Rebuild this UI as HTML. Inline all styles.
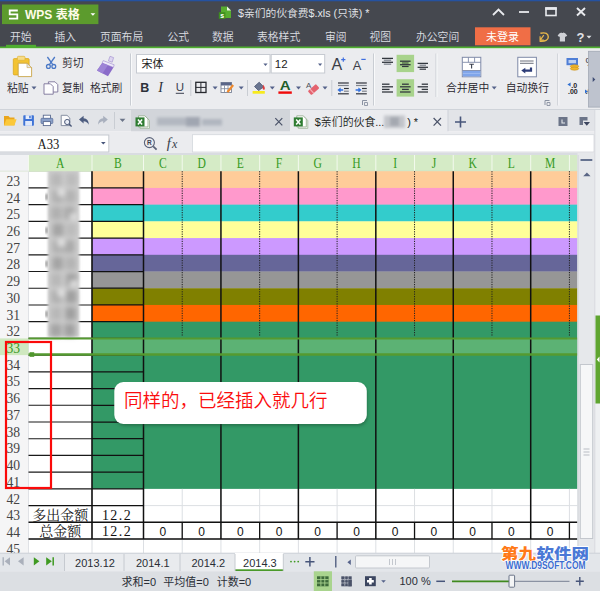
<!DOCTYPE html>
<html lang="zh-CN"><head><meta charset="utf-8"><title>WPS 表格</title>
<style>
html,body{margin:0;padding:0;background:#fff;overflow:hidden}
body{width:600px;height:591px;font-family:"Liberation Sans","Noto Sans CJK SC",sans-serif}
svg{display:block}
</style></head><body>
<svg width="600" height="591" viewBox="0 0 600 591">
<defs>
<filter id="blur3" x="-20%" y="-20%" width="140%" height="140%"><feGaussianBlur stdDeviation="2.7"/></filter>
<filter id="blur1" x="-20%" y="-20%" width="140%" height="140%"><feGaussianBlur stdDeviation="1"/></filter>
<filter id="blur2" x="-20%" y="-20%" width="140%" height="140%"><feGaussianBlur stdDeviation="1.6"/></filter>
<filter id="shadow" x="-10%" y="-20%" width="120%" height="150%"><feGaussianBlur stdDeviation="1.5"/></filter>
<linearGradient id="wpsg" x1="0" y1="0" x2="0" y2="1"><stop offset="0" stop-color="#6aa834"/><stop offset="1" stop-color="#4f8f25"/></linearGradient>
</defs>
<rect x="0" y="0" width="600" height="48" fill="#45484f" />
<rect x="0" y="0" width="600" height="1.3" fill="#2552a0" />
<rect x="2" y="4.5" width="96.4" height="19.6" fill="#5c9b2d"/>
<path d="M17.8 10.5 H9.7 V14.3 H17.3 V18.6 H9" fill="none" stroke="#fff" stroke-width="1.8"/>
<text x="25" y="19" font-size="12" fill="#fffbe8" font-family='"Liberation Sans","Noto Sans CJK SC",sans-serif' text-anchor="start" font-weight="bold" >WPS 表格</text>
<path d="M90.5 13.2 H95.3 L92.9 15.8 Z" fill="#fff"/>
<g><path d="M221 6.4 H227 L231 10.6 V18 H221 Z" fill="#57ad2f"/><path d="M227 6.4 L231 10.6 H227 Z" fill="#eaf6e2"/><rect x="218.8" y="12.2" width="6.6" height="6.6" fill="#3f8f1f"/></g>
<text x="222.1" y="17.7" font-size="7" fill="#fff" font-family='"Liberation Sans","Noto Sans CJK SC",sans-serif' text-anchor="middle" font-weight="bold" >s</text>
<text x="238" y="16.6" font-size="10.75" fill="#e2e5ea" font-family='"Liberation Sans","Noto Sans CJK SC",sans-serif' text-anchor="start" font-weight="350" >$亲们的伙食费$.xls (只读) *</text>
<path d="M493 15 L498.5 9.5 L504 15" fill="none" stroke="#e8eaee" stroke-width="1.8"/>
<line x1="519" y1="12" x2="529" y2="12" stroke="#e8eaee" stroke-width="1.8" />
<rect x="546" y="8" width="10" height="7.5" fill="none" stroke="#e8eaee" stroke-width="1.6"/>
<line x1="545.2" y1="8.6" x2="556.8" y2="8.6" stroke="#e8eaee" stroke-width="2.6" />
<path d="M577 8 L585 15.5 M585 8 L577 15.5" fill="none" stroke="#e8eaee" stroke-width="1.9"/>
<text x="10" y="41.2" font-size="10.8" fill="#dcdee2" font-family='"Liberation Sans","Noto Sans CJK SC",sans-serif' text-anchor="start" font-weight="350" >开始</text>
<text x="54.5" y="41.2" font-size="10.8" fill="#dcdee2" font-family='"Liberation Sans","Noto Sans CJK SC",sans-serif' text-anchor="start" font-weight="350" >插入</text>
<text x="100" y="41.2" font-size="10.8" fill="#dcdee2" font-family='"Liberation Sans","Noto Sans CJK SC",sans-serif' text-anchor="start" font-weight="350" >页面布局</text>
<text x="167.5" y="41.2" font-size="10.8" fill="#dcdee2" font-family='"Liberation Sans","Noto Sans CJK SC",sans-serif' text-anchor="start" font-weight="350" >公式</text>
<text x="212" y="41.2" font-size="10.8" fill="#dcdee2" font-family='"Liberation Sans","Noto Sans CJK SC",sans-serif' text-anchor="start" font-weight="350" >数据</text>
<text x="257" y="41.2" font-size="10.8" fill="#dcdee2" font-family='"Liberation Sans","Noto Sans CJK SC",sans-serif' text-anchor="start" font-weight="350" >表格样式</text>
<text x="325" y="41.2" font-size="10.8" fill="#dcdee2" font-family='"Liberation Sans","Noto Sans CJK SC",sans-serif' text-anchor="start" font-weight="350" >审阅</text>
<text x="369.5" y="41.2" font-size="10.8" fill="#dcdee2" font-family='"Liberation Sans","Noto Sans CJK SC",sans-serif' text-anchor="start" font-weight="350" >视图</text>
<text x="416" y="41.2" font-size="10.8" fill="#dcdee2" font-family='"Liberation Sans","Noto Sans CJK SC",sans-serif' text-anchor="start" font-weight="350" >办公空间</text>
<rect x="6" y="44.8" width="30" height="2.4" fill="#4fae30" />
<rect x="475" y="27.3" width="55.5" height="18" fill="#f06e46" />
<text x="502.5" y="41.3" font-size="11" fill="#fff" font-family='"Liberation Sans","Noto Sans CJK SC",sans-serif' text-anchor="middle" font-weight="normal" >未登录</text>
<path d="M540.4 33.3 Q548.3 31.6 548.3 37.1 Q548.3 41.8 539.6 41.2" fill="none" stroke="#e8b84a" stroke-width="1.4"/><path d="M543.8 35.2 L540.3 39.9 M540.1 36.2 V40.1 H543.9" fill="none" stroke="#e8b84a" stroke-width="1.2"/>
<path d="M559.6 33.2 L561.4 32.4 Q562 33.8 563.4 32.4 L565.2 33.2 L567.2 35.6 L565.6 36.9 L565 36.3 V41.5 H559.8 V36.3 L559.2 36.9 L557.6 35.6 Z" fill="#cfd1d6"/>
<text x="576.4" y="41.6" font-size="13" fill="#e0e2e6" font-family='"Liberation Sans","Noto Sans CJK SC",sans-serif' text-anchor="start" font-weight="bold" >?</text>
<path d="M586.5 35.7 H591.5 L589 38.6 Z" fill="#e0e2e6"/>
<rect x="0" y="46.5" width="600" height="1.9" fill="#4fae30" />
<rect x="0" y="48.6" width="600" height="61" fill="#ebecef" />
<g><rect x="13.3" y="58.6" width="15.8" height="16.3" rx="1" fill="#f3c332" stroke="#dba820" stroke-width="0.8"/><rect x="17.4" y="56.3" width="7.6" height="4" rx="1" fill="#f7dc86" stroke="#e0b33a" stroke-width="0.7"/><path d="M18.2 63.2 H27 L31.6 67.6 V76.6 H18.2 Z" fill="#ffffff" stroke="#c9a548" stroke-width="0.9"/><path d="M27 63.2 V67.6 H31.6 Z" fill="#e6e6ea" stroke="#c9a548" stroke-width="0.6"/></g>
<text x="7" y="92.3" font-size="10.8" fill="#1f232b" font-family='"Liberation Sans","Noto Sans CJK SC",sans-serif' text-anchor="start" font-weight="350" >粘贴</text>
<path d="M31.5 86.6 h5 l-2.5 2.8 Z" fill="#55628a"/>
<g fill="none" stroke="#4a78c6" stroke-width="1.3"><path d="M47.4 57 L52.8 64.6"/><path d="M54.8 57 L49.4 64.6"/><circle cx="48.4" cy="66.4" r="1.9"/><circle cx="53.8" cy="66.4" r="1.9"/></g>
<text x="62" y="67.3" font-size="10.8" fill="#1f232b" font-family='"Liberation Sans","Noto Sans CJK SC",sans-serif' text-anchor="start" font-weight="350" >剪切</text>
<g fill="#fdfdfe" stroke="#7a7398" stroke-width="0.9"><path d="M48.4 81.8 H55 L57.8 84.6 V92 H48.4 Z"/><path d="M44 83.8 H50.4 L53.2 86.6 V94.2 H44 Z"/></g>
<text x="62" y="92.3" font-size="10.8" fill="#1f232b" font-family='"Liberation Sans","Noto Sans CJK SC",sans-serif' text-anchor="start" font-weight="350" >复制</text>
<g><path d="M110 56.3 L113.6 57.6 L112.2 62.2 L108.4 60.9 Z" fill="#ddd5f0" stroke="#a897d2" stroke-width="0.7"/><path d="M103.2 60.6 L114.2 64.8 L113.4 67.4 L102.2 63.1 Z" fill="#eee9f9" stroke="#a897d2" stroke-width="0.7"/><path d="M102.2 63.1 L113.4 67.4 L108 76.3 L97 70.5 Z" fill="#8a6bc9"/><path d="M102.2 63.1 L107.8 65.2 L102.5 73.4 L97 70.5 Z" fill="#9d83d6"/></g>
<text x="90" y="92.3" font-size="10.8" fill="#1f232b" font-family='"Liberation Sans","Noto Sans CJK SC",sans-serif' text-anchor="start" font-weight="350" >格式刷</text>
<line x1="130.5" y1="53.5" x2="130.5" y2="105.5" stroke="#c9cdd3" stroke-width="1" />
<line x1="131.5" y1="53.5" x2="131.5" y2="105.5" stroke="#f9fafb" stroke-width="1" />
<rect x="136.5" y="54.5" width="133.5" height="18.5" fill="#fff" stroke="#c6cad1" stroke-width="1"/>
<text x="141.5" y="67.8" font-size="11" fill="#222" font-family='"Liberation Sans","Noto Sans CJK SC",sans-serif' text-anchor="start" font-weight="normal" >宋体</text>
<path d="M263.4 63.6 h4.2 l-2.1 2.4 Z" fill="#55628a"/>
<rect x="271.2" y="54.5" width="53.5" height="18.5" fill="#fff" stroke="#c6cad1" stroke-width="1"/>
<text x="274.8" y="68" font-size="11.5" fill="#222" font-family='"Liberation Sans","Noto Sans CJK SC",sans-serif' text-anchor="start" font-weight="normal" >12</text>
<path d="M318 63.6 h4.2 l-2.1 2.4 Z" fill="#55628a"/>
<text x="331.4" y="69.8" font-size="16" fill="#3a3e48" font-family='"Liberation Sans","Noto Sans CJK SC",sans-serif' text-anchor="start" font-weight="normal" >A</text>
<path d="M341.2 59.7 H345.4 M343.3 57.6 V61.8" stroke="#3f6fe0" stroke-width="1.2" fill="none"/>
<text x="352.8" y="69.8" font-size="12.8" fill="#3a3e48" font-family='"Liberation Sans","Noto Sans CJK SC",sans-serif' text-anchor="start" font-weight="normal" >A</text>
<line x1="361.3" y1="59.4" x2="365.7" y2="59.4" stroke="#3f6fe0" stroke-width="1.2" />
<text x="140.3" y="92.2" font-size="12.5" fill="#2d313a" font-family='"Liberation Sans","Noto Sans CJK SC",sans-serif' text-anchor="start" font-weight="bold" >B</text>
<text x="158.3" y="92.4" font-size="14" fill="#2d313a" font-family='"Liberation Serif","Noto Serif CJK SC",serif' text-anchor="start" font-weight="normal" font-style="italic">I</text>
<text x="175.8" y="91.2" font-size="11.5" fill="#3c4250" font-family='"Liberation Sans","Noto Sans CJK SC",sans-serif' text-anchor="start" font-weight="normal" >U</text>
<line x1="175.8" y1="93.3" x2="184" y2="93.3" stroke="#3c4250" stroke-width="1" />
<line x1="190.8" y1="80" x2="190.8" y2="96" stroke="#c9cdd3" stroke-width="1" />
<g fill="none" stroke="#26282e"><rect x="195.8" y="82.3" width="10.2" height="10.2" stroke-width="1.3"/><path d="M200.9 82.3 V92.5 M195.8 87.4 H206" stroke-width="1"/></g>
<path d="M212.6 86.6 h5 l-2.5 2.8 Z" fill="#55628a"/>
<g><rect x="221" y="82.5" width="10.5" height="10" fill="#fff" stroke="#7b8498" stroke-width="0.9"/><rect x="221" y="82.5" width="10.5" height="3" fill="#5a6688"/><path d="M221 88.7 H231.5 M224.5 85.5 V92.5 M228 85.5 V92.5" stroke="#7b8498" stroke-width="0.8" fill="none"/><path d="M226.5 91.5 L232.3 84.3 L234 85.8 L228.4 92.8 Z" fill="#f08a2c"/></g>
<path d="M238.7 86.6 h5 l-2.5 2.8 Z" fill="#55628a"/>
<line x1="247.5" y1="80" x2="247.5" y2="96" stroke="#c9cdd3" stroke-width="1" />
<g><path d="M254.5 86.5 L259.2 82.2 L263.6 86.8 L258.6 90.6 Z" fill="#6a7590" stroke="#4a5672" stroke-width="0.8"/><path d="M263 84.5 Q265.5 87.5 264.6 89.6 Q263.2 90.4 262.6 88.6 Z" fill="#e23b3b"/><rect x="252.6" y="91" width="12.2" height="2.7" fill="#f7ea1c"/></g>
<path d="M269.8 86.6 h5 l-2.5 2.8 Z" fill="#55628a"/>
<text transform="translate(285.1,90.3) scale(1.16,1)" font-size="13" fill="#1f5e2a" font-family='"Liberation Sans","Noto Sans CJK SC",sans-serif' text-anchor="middle" font-weight="bold" >A</text>
<rect x="278.4" y="91.4" width="13.4" height="2.4" fill="#f00a0a" />
<path d="M296 86.6 h5 l-2.5 2.8 Z" fill="#55628a"/>
<text x="306" y="88.3" font-size="8" fill="#4a4f5a" font-family='"Liberation Sans","Noto Sans CJK SC",sans-serif' text-anchor="start" font-weight="normal" >A</text>
<g transform="rotate(-42 313.6 89.6)"><rect x="308.2" y="86.9" width="10.8" height="5.4" rx="1" fill="#e4636f"/><rect x="310.6" y="86.9" width="1.2" height="5.4" fill="#f4b0b6"/></g>
<path d="M322.5 86.6 h5 l-2.5 2.8 Z" fill="#55628a"/>
<line x1="331.8" y1="80" x2="331.8" y2="96" stroke="#c9cdd3" stroke-width="1" />
<line x1="338" y1="83" x2="348.8" y2="83" stroke="#2f333b" stroke-width="1.2" />
<line x1="338" y1="85.5" x2="348.8" y2="85.5" stroke="#7f848d" stroke-width="1.2" />
<line x1="344" y1="88.5" x2="348.8" y2="88.5" stroke="#2f333b" stroke-width="1.2" />
<line x1="344" y1="91.2" x2="348.8" y2="91.2" stroke="#7f848d" stroke-width="1.2" />
<line x1="338" y1="93.8" x2="348.8" y2="93.8" stroke="#2f333b" stroke-width="1.2" />
<path d="M340.6 87.4 V92.6 L337.4 90 Z" fill="#2f6fe0"/>
<line x1="340" y1="90" x2="343.2" y2="90" stroke="#2f6fe0" stroke-width="1.5" />
<line x1="356" y1="83" x2="366.8" y2="83" stroke="#2f333b" stroke-width="1.2" />
<line x1="356" y1="85.5" x2="366.8" y2="85.5" stroke="#7f848d" stroke-width="1.2" />
<line x1="362" y1="88.5" x2="366.8" y2="88.5" stroke="#2f333b" stroke-width="1.2" />
<line x1="362" y1="91.2" x2="366.8" y2="91.2" stroke="#7f848d" stroke-width="1.2" />
<line x1="356" y1="93.8" x2="366.8" y2="93.8" stroke="#2f333b" stroke-width="1.2" />
<path d="M358.4 87.4 V92.6 L361.6 90 Z" fill="#2f6fe0"/>
<line x1="355.6" y1="90" x2="359" y2="90" stroke="#2f6fe0" stroke-width="1.5" />
<path d="M362.5 105.0 V100.5 H367.0" fill="none" stroke="#8a92a2" stroke-width="1"/><path d="M364.5 102.5 H367.5 V105.5 H364.5 Z" fill="none" stroke="#8a92a2" stroke-width="0.9"/>
<line x1="373.5" y1="53.5" x2="373.5" y2="105.5" stroke="#c9cdd3" stroke-width="1" />
<line x1="374.5" y1="53.5" x2="374.5" y2="105.5" stroke="#f9fafb" stroke-width="1" />
<rect x="396.6" y="54.8" width="17.5" height="17.3" fill="#a8d38c" />
<rect x="396.6" y="79.2" width="17.5" height="17.4" fill="#a8d38c" />
<line x1="382" y1="58.4" x2="393" y2="58.4" stroke="#33383f" stroke-width="1.3" />
<line x1="383.8" y1="60.3" x2="391.2" y2="60.3" stroke="#8f949c" stroke-width="1.5" />
<line x1="382" y1="62.3" x2="393" y2="62.3" stroke="#33383f" stroke-width="1.3" />
<line x1="383.8" y1="64.2" x2="391.2" y2="64.2" stroke="#8f949c" stroke-width="1.5" />
<line x1="400" y1="61.2" x2="410.6" y2="61.2" stroke="#33383f" stroke-width="1.3" />
<line x1="402" y1="63" x2="408.6" y2="63" stroke="#5d7a52" stroke-width="1.6" />
<line x1="400" y1="64.7" x2="410.6" y2="64.7" stroke="#33383f" stroke-width="1.3" />
<line x1="402" y1="66.5" x2="408.6" y2="66.5" stroke="#33383f" stroke-width="1.2" />
<line x1="417.6" y1="63.4" x2="428" y2="63.4" stroke="#33383f" stroke-width="1.3" />
<line x1="419.6" y1="65.3" x2="426" y2="65.3" stroke="#8f949c" stroke-width="1.5" />
<line x1="417.6" y1="67.3" x2="428" y2="67.3" stroke="#33383f" stroke-width="1.3" />
<line x1="419.6" y1="69.2" x2="426" y2="69.2" stroke="#33383f" stroke-width="1.2" />
<line x1="382" y1="84.2" x2="389.5" y2="84.2" stroke="#33383f" stroke-width="1.3" />
<line x1="382" y1="86.8" x2="393" y2="86.8" stroke="#33383f" stroke-width="1.3" />
<line x1="382" y1="89.4" x2="389.5" y2="89.4" stroke="#33383f" stroke-width="1.3" />
<line x1="382" y1="92" x2="393" y2="92" stroke="#33383f" stroke-width="1.3" />
<line x1="402" y1="84.2" x2="408.8" y2="84.2" stroke="#33383f" stroke-width="1.3" />
<line x1="400" y1="86.8" x2="410.6" y2="86.8" stroke="#33383f" stroke-width="1.3" />
<line x1="402" y1="89.4" x2="408.8" y2="89.4" stroke="#33383f" stroke-width="1.3" />
<line x1="400" y1="92" x2="410.6" y2="92" stroke="#33383f" stroke-width="1.3" />
<line x1="421.7" y1="84.2" x2="428" y2="84.2" stroke="#33383f" stroke-width="1.3" />
<line x1="417.6" y1="86.8" x2="428" y2="86.8" stroke="#33383f" stroke-width="1.3" />
<line x1="421.7" y1="89.4" x2="428" y2="89.4" stroke="#33383f" stroke-width="1.3" />
<line x1="417.6" y1="92" x2="428" y2="92" stroke="#33383f" stroke-width="1.3" />
<line x1="436" y1="53.5" x2="436" y2="97" stroke="#c9cdd3" stroke-width="1" />
<line x1="437" y1="53.5" x2="437" y2="97" stroke="#f9fafb" stroke-width="1" />
<g><rect x="462.3" y="57.3" width="18.5" height="19.5" fill="#fff" stroke="#7f8aa8" stroke-width="1"/><path d="M462.3 62.3 H480.8 M468.4 57.3 V62.3 M474.6 57.3 V62.3" stroke="#7f8aa8" stroke-width="0.9" fill="none"/><rect x="462.8" y="70.6" width="17.5" height="5.8" fill="#7fa5ea"/><path d="M462.8 73.4 H480.3" stroke="#a5c0f2" stroke-width="0.8"/><path d="M462.3 70.5 H480.8" stroke="#7f8aa8" stroke-width="0.9"/><path d="M469.3 64.3 H473.9 M471.6 64.3 V68.6" stroke="#3c4250" stroke-width="1.1" fill="none"/></g>
<text x="446" y="92.3" font-size="10.8" fill="#1f232b" font-family='"Liberation Sans","Noto Sans CJK SC",sans-serif' text-anchor="start" font-weight="350" >合并居中</text>
<path d="M491.7 86.6 h5 l-2.5 2.8 Z" fill="#55628a"/>
<g><rect x="517.8" y="57.3" width="18.6" height="19.5" fill="#fff" stroke="#7f8aa8" stroke-width="1"/><path d="M520 61 H533.6 M520 63.3 H533.6" stroke="#5a5f6c" stroke-width="0.9" fill="none"/><path d="M531 67.6 V70.6 H524.5" stroke="#2d3d78" stroke-width="2.2" fill="none"/><path d="M525.3 67.8 V73.4 L521.3 70.6 Z" fill="#2d3d78"/></g>
<text x="505.8" y="92.3" font-size="10.8" fill="#1f232b" font-family='"Liberation Sans","Noto Sans CJK SC",sans-serif' text-anchor="start" font-weight="350" >自动换行</text>
<path d="M545 105.0 V100.5 H549.5" fill="none" stroke="#8a92a2" stroke-width="1"/><path d="M547 102.5 H550 V105.5 H547 Z" fill="none" stroke="#8a92a2" stroke-width="0.9"/>
<line x1="557.8" y1="53.5" x2="557.8" y2="105.5" stroke="#c9cdd3" stroke-width="1" />
<line x1="558.8" y1="53.5" x2="558.8" y2="105.5" stroke="#f9fafb" stroke-width="1" />
<g><rect x="566.5" y="58" width="11.5" height="7.2" fill="#4f7ed6"/><rect x="568.5" y="60" width="7.5" height="3.2" fill="#bcd0f2"/><ellipse cx="574.5" cy="66.3" rx="4.2" ry="1.6" fill="#f0b62e" stroke="#c98f15" stroke-width="0.6"/><ellipse cx="574.5" cy="68.6" rx="4.2" ry="1.6" fill="#f0b62e" stroke="#c98f15" stroke-width="0.6"/></g>
<text x="571.3" y="87.6" font-size="7" fill="#1f2228" font-family='"Liberation Sans","Noto Sans CJK SC",sans-serif' text-anchor="start" font-weight="bold" >.0</text>
<text x="568" y="94.4" font-size="7" fill="#1f2228" font-family='"Liberation Sans","Noto Sans CJK SC",sans-serif' text-anchor="start" font-weight="bold" >.00</text>
<path d="M570.6 82.6 V86.4 L567.4 84.5 Z" fill="#2f6fd0"/>
<text x="585.5" y="66" font-size="11" fill="#3c4250" font-family='"Liberation Sans","Noto Sans CJK SC",sans-serif' text-anchor="start" font-weight="normal" >%</text>
<text x="585.5" y="94.2" font-size="7" fill="#2d313a" font-family='"Liberation Sans","Noto Sans CJK SC",sans-serif' text-anchor="start" font-weight="bold" >.0</text>
<path d="M585 89.5 V93.5 L588 91.5 Z" fill="#2f6fd0"/>
<rect x="588.5" y="51.3" width="12" height="55.8" fill="#bec3ce" stroke="#a2a8b5" stroke-width="0.8"/>
<path d="M592.7 77 L595.3 79.5 L592.7 82 Z" fill="#3d4b72"/>
<rect x="0" y="109.5" width="600" height="22" fill="#e2e4e8" />
<line x1="0" y1="109.5" x2="600" y2="109.5" stroke="#cfd3d9" stroke-width="1" />
<g><path d="M4 125.3 V116 H8.5 L9.8 117.5 H14.5 V125.3 Z" fill="#e9a51c"/><path d="M4 125.5 L6.3 119.3 H16.6 L14.4 125.5 Z" fill="#fbc83a"/></g>
<g><rect x="23.3" y="115.2" width="10.6" height="10.6" rx="0.8" fill="#3e73d6"/><rect x="25.6" y="115.2" width="6" height="3.8" fill="#e8eefb"/><rect x="25.2" y="121" width="6.8" height="4.8" fill="#dfe8fa"/><rect x="29.2" y="115.8" width="1.5" height="2.5" fill="#3e73d6"/></g>
<g><rect x="43.3" y="115.2" width="7.2" height="3.4" fill="#fff" stroke="#5a6a90" stroke-width="0.9"/><rect x="41" y="118.3" width="11.8" height="5.2" rx="0.8" fill="#8aa0c8" stroke="#5f74a0" stroke-width="0.8"/><rect x="43.3" y="121.6" width="7.2" height="4" fill="#fff" stroke="#5a6a90" stroke-width="0.9"/></g>
<g><path d="M61.2 115.3 H67 L69.8 118 V125.6 H61.2 Z" fill="#fbfbfc" stroke="#7b8498" stroke-width="0.9"/><circle cx="67.2" cy="122" r="2.6" fill="#e9edf6" stroke="#4a5878" stroke-width="1"/><path d="M69 124 L71.6 126.4" stroke="#4a5878" stroke-width="1.4"/></g>
<path d="M79 119.6 L83.6 115.8 V118.2 Q88.6 118.2 88.8 124.8 Q87 121.2 83.6 121.2 V123.6 Z" fill="#4e5d80"/>
<path d="M107.8 119.6 L103.2 115.8 V118.2 Q98.2 118.2 98 124.8 Q99.8 121.2 103.2 121.2 V123.6 Z" fill="#a9b0be"/>
<line x1="114.5" y1="112" x2="114.5" y2="129" stroke="#c9cdd3" stroke-width="1" />
<path d="M119.6 118.8 h5.8 l-2.9 3.2 Z" fill="#6b7488"/>
<rect x="131" y="110" width="159" height="21.5" fill="#d2d5da" />
<g transform="translate(135.5,114.8)"><path d="M4.5 2.5 H10.8 L14 5.6 V13.6 H4.5 Z" fill="#f4f8f2" stroke="#9fb59a" stroke-width="0.8"/><path d="M3 1 H9.3 L12.5 4.1 V12.1 H3 Z" fill="#ffffff" stroke="#8fa889" stroke-width="0.8"/><rect x="0" y="2.6" width="9" height="9" fill="#2f7d32"/><path d="M2.4 4.6 L6.6 9.6 M6.6 4.6 L2.4 9.6" stroke="#fff" stroke-width="1.5" fill="none"/></g>
<g filter="url(#blur2)"><rect x="157" y="117.5" width="30" height="8" fill="#b2b7c0"/><rect x="186" y="117" width="14" height="9.5" fill="#a0a6b1"/><rect x="202" y="119" width="20" height="6.5" fill="#b0b6bf"/></g>
<path d="M275.3 118.2 L282.3 125.4 M282.3 118.2 L275.3 125.4" stroke="#4a5268" stroke-width="1.2" fill="none"/>
<rect x="290" y="110" width="158" height="22" fill="#ebecef" />
<g transform="translate(293.8,114.8)"><path d="M4.5 2.5 H10.8 L14 5.6 V13.6 H4.5 Z" fill="#f4f8f2" stroke="#9fb59a" stroke-width="0.8"/><path d="M3 1 H9.3 L12.5 4.1 V12.1 H3 Z" fill="#ffffff" stroke="#8fa889" stroke-width="0.8"/><rect x="0" y="2.6" width="9" height="9" fill="#2f7d32"/><path d="M2.4 4.6 L6.6 9.6 M6.6 4.6 L2.4 9.6" stroke="#fff" stroke-width="1.5" fill="none"/></g>
<text x="314.8" y="126.3" font-size="10.9" fill="#1c1e22" font-family='"Liberation Sans","Noto Sans CJK SC",sans-serif' text-anchor="start" font-weight="350" >$亲们的伙食...</text>
<g filter="url(#blur2)"><rect x="384" y="115.5" width="21" height="12.5" fill="#c2c5ca"/><rect x="390" y="117" width="9" height="9" fill="#a4a8b0"/></g>
<text x="407.2" y="126.3" font-size="10.9" fill="#1c1e22" font-family='"Liberation Sans","Noto Sans CJK SC",sans-serif' text-anchor="start" font-weight="normal" >) *</text>
<path d="M433.6 118 L441 125.6 M441 118 L433.6 125.6" stroke="#4a5268" stroke-width="1.2" fill="none"/>
<line x1="448" y1="110" x2="448" y2="131.5" stroke="#cdd1d8" stroke-width="1" />
<path d="M455 122 H466 M460.5 116.5 V127.5" stroke="#47557a" stroke-width="1.6" fill="none"/>
<rect x="558.5" y="117" width="9" height="9" fill="#6b7488"/><path d="M562 119.5 V123 H565" stroke="#e4e7eb" stroke-width="1.1" fill="none"/>
<path d="M579.5 117 H587.5 V120.5 H583 V125 H579.5 Z" fill="#6b7488"/><path d="M583.6 122 H590 L586.8 125.8 Z" fill="#3d4660"/>
<rect x="0" y="131.5" width="600" height="22" fill="#ebecef" />
<rect x="-1" y="135" width="109.8" height="17" fill="#fff" stroke="#c6cad1" stroke-width="1"/>
<text transform="translate(48.4,148.7) scale(0.87,1)" font-size="14.5" fill="#222" font-family='"Liberation Serif","Noto Serif CJK SC",serif' text-anchor="middle" font-weight="normal" >A33</text>
<path d="M101 142 h4.6 l-2.3 2.6 Z" fill="#47557a"/>
<g fill="none" stroke="#5a6379"><circle cx="149.4" cy="142.6" r="5" stroke-width="1.1"/><path d="M153.2 146.4 L156.6 149.6" stroke-width="1.8"/></g>
<text x="149.4" y="145" font-size="6.5" fill="#3c4250" font-family='"Liberation Sans","Noto Sans CJK SC",sans-serif' text-anchor="middle" font-weight="bold" >R</text>
<text x="166.8" y="148" font-size="14.5" fill="#3a3f4c" font-family='"Liberation Serif","Noto Serif CJK SC",serif' text-anchor="start" font-weight="normal" font-style="italic">f</text>
<text x="172" y="148.2" font-size="12" fill="#3a3f4c" font-family='"Liberation Serif","Noto Serif CJK SC",serif' text-anchor="start" font-weight="normal" font-style="italic">x</text>
<rect x="192.5" y="134.7" width="401.5" height="17.3" fill="#fff" stroke="#d4d7dc" stroke-width="0.8"/>
<rect x="0" y="153" width="600" height="400" fill="#ffffff" />
<rect x="0" y="153" width="600" height="2" fill="#d9dce1" />
<rect x="0" y="155" width="577.5" height="16.5" fill="#d5ebc6" />
<rect x="0" y="155" width="28.5" height="16.5" fill="#f1f2f4" />
<line x1="28.5" y1="155" x2="28.5" y2="171.5" stroke="#f3f9ee" stroke-width="1" />
<line x1="92.0" y1="155" x2="92.0" y2="171.5" stroke="#f3f9ee" stroke-width="1" />
<line x1="143.5" y1="155" x2="143.5" y2="171.5" stroke="#f3f9ee" stroke-width="1" />
<line x1="182.22" y1="155" x2="182.22" y2="171.5" stroke="#f3f9ee" stroke-width="1" />
<line x1="220.94" y1="155" x2="220.94" y2="171.5" stroke="#f3f9ee" stroke-width="1" />
<line x1="259.65999999999997" y1="155" x2="259.65999999999997" y2="171.5" stroke="#f3f9ee" stroke-width="1" />
<line x1="298.38" y1="155" x2="298.38" y2="171.5" stroke="#f3f9ee" stroke-width="1" />
<line x1="337.1" y1="155" x2="337.1" y2="171.5" stroke="#f3f9ee" stroke-width="1" />
<line x1="375.82" y1="155" x2="375.82" y2="171.5" stroke="#f3f9ee" stroke-width="1" />
<line x1="414.53999999999996" y1="155" x2="414.53999999999996" y2="171.5" stroke="#f3f9ee" stroke-width="1" />
<line x1="453.26" y1="155" x2="453.26" y2="171.5" stroke="#f3f9ee" stroke-width="1" />
<line x1="491.98" y1="155" x2="491.98" y2="171.5" stroke="#f3f9ee" stroke-width="1" />
<line x1="530.7" y1="155" x2="530.7" y2="171.5" stroke="#f3f9ee" stroke-width="1" />
<line x1="569.42" y1="155" x2="569.42" y2="171.5" stroke="#f3f9ee" stroke-width="1" />
<line x1="608.14" y1="155" x2="608.14" y2="171.5" stroke="#f3f9ee" stroke-width="1" />
<line x1="0" y1="171.3" x2="577.5" y2="171.3" stroke="#c9d8c0" stroke-width="0.8" />
<text transform="translate(60.2,168.3) scale(0.8,1)" font-size="14.5" fill="#359a22" font-family='"Liberation Serif","Noto Serif CJK SC",serif' text-anchor="middle" font-weight="normal" >A</text>
<text transform="translate(117.8,168.3) scale(0.8,1)" font-size="14.5" fill="#359a22" font-family='"Liberation Serif","Noto Serif CJK SC",serif' text-anchor="middle" font-weight="normal" >B</text>
<text transform="translate(162.9,168.3) scale(0.8,1)" font-size="14.5" fill="#359a22" font-family='"Liberation Serif","Noto Serif CJK SC",serif' text-anchor="middle" font-weight="normal" >C</text>
<text transform="translate(201.6,168.3) scale(0.8,1)" font-size="14.5" fill="#359a22" font-family='"Liberation Serif","Noto Serif CJK SC",serif' text-anchor="middle" font-weight="normal" >D</text>
<text transform="translate(240.3,168.3) scale(0.8,1)" font-size="14.5" fill="#359a22" font-family='"Liberation Serif","Noto Serif CJK SC",serif' text-anchor="middle" font-weight="normal" >E</text>
<text transform="translate(279.0,168.3) scale(0.8,1)" font-size="14.5" fill="#359a22" font-family='"Liberation Serif","Noto Serif CJK SC",serif' text-anchor="middle" font-weight="normal" >F</text>
<text transform="translate(317.7,168.3) scale(0.8,1)" font-size="14.5" fill="#359a22" font-family='"Liberation Serif","Noto Serif CJK SC",serif' text-anchor="middle" font-weight="normal" >G</text>
<text transform="translate(356.5,168.3) scale(0.8,1)" font-size="14.5" fill="#359a22" font-family='"Liberation Serif","Noto Serif CJK SC",serif' text-anchor="middle" font-weight="normal" >H</text>
<text transform="translate(395.2,168.3) scale(0.8,1)" font-size="14.5" fill="#359a22" font-family='"Liberation Serif","Noto Serif CJK SC",serif' text-anchor="middle" font-weight="normal" >I</text>
<text transform="translate(433.9,168.3) scale(0.8,1)" font-size="14.5" fill="#359a22" font-family='"Liberation Serif","Noto Serif CJK SC",serif' text-anchor="middle" font-weight="normal" >J</text>
<text transform="translate(472.6,168.3) scale(0.8,1)" font-size="14.5" fill="#359a22" font-family='"Liberation Serif","Noto Serif CJK SC",serif' text-anchor="middle" font-weight="normal" >K</text>
<text transform="translate(511.3,168.3) scale(0.8,1)" font-size="14.5" fill="#359a22" font-family='"Liberation Serif","Noto Serif CJK SC",serif' text-anchor="middle" font-weight="normal" >L</text>
<text transform="translate(550.1,168.3) scale(0.8,1)" font-size="14.5" fill="#359a22" font-family='"Liberation Serif","Noto Serif CJK SC",serif' text-anchor="middle" font-weight="normal" >M</text>
<rect x="0" y="171.5" width="28.5" height="381.5" fill="#f5f5f6" />
<line x1="28.5" y1="171.5" x2="28.5" y2="553" stroke="#e0e2e6" stroke-width="1" />
<rect x="92.0" y="171.2" width="485.5" height="17.02" fill="#FFCC99" />
<rect x="92.0" y="187.92" width="485.5" height="17.02" fill="#FF99CC" />
<rect x="92.0" y="204.64" width="485.5" height="17.02" fill="#33CCCC" />
<rect x="92.0" y="221.36" width="485.5" height="17.02" fill="#FFFF99" />
<rect x="92.0" y="238.08" width="485.5" height="17.02" fill="#CC99FF" />
<rect x="92.0" y="254.8" width="485.5" height="17.02" fill="#666699" />
<rect x="92.0" y="271.52" width="485.5" height="17.02" fill="#969696" />
<rect x="92.0" y="288.24" width="485.5" height="17.02" fill="#808000" />
<rect x="92.0" y="304.96" width="485.5" height="17.02" fill="#FF6600" />
<rect x="92.0" y="321.68" width="485.5" height="167.2" fill="#339966" />
<rect x="92.0" y="338.4" width="485.5" height="16.72" fill="#5cb274" />
<line x1="143.5" y1="488.88" x2="143.5" y2="553" stroke="#dcdfe3" stroke-width="1" />
<line x1="182.22" y1="488.88" x2="182.22" y2="553" stroke="#dcdfe3" stroke-width="1" />
<line x1="220.94" y1="488.88" x2="220.94" y2="553" stroke="#dcdfe3" stroke-width="1" />
<line x1="259.65999999999997" y1="488.88" x2="259.65999999999997" y2="553" stroke="#dcdfe3" stroke-width="1" />
<line x1="298.38" y1="488.88" x2="298.38" y2="553" stroke="#dcdfe3" stroke-width="1" />
<line x1="337.1" y1="488.88" x2="337.1" y2="553" stroke="#dcdfe3" stroke-width="1" />
<line x1="375.82" y1="488.88" x2="375.82" y2="553" stroke="#dcdfe3" stroke-width="1" />
<line x1="414.53999999999996" y1="488.88" x2="414.53999999999996" y2="553" stroke="#dcdfe3" stroke-width="1" />
<line x1="453.26" y1="488.88" x2="453.26" y2="553" stroke="#dcdfe3" stroke-width="1" />
<line x1="491.98" y1="488.88" x2="491.98" y2="553" stroke="#dcdfe3" stroke-width="1" />
<line x1="530.7" y1="488.88" x2="530.7" y2="553" stroke="#dcdfe3" stroke-width="1" />
<line x1="569.42" y1="488.88" x2="569.42" y2="553" stroke="#dcdfe3" stroke-width="1" />
<line x1="608.14" y1="488.88" x2="608.14" y2="553" stroke="#dcdfe3" stroke-width="1" />
<line x1="92.0" y1="488.88" x2="92.0" y2="553" stroke="#dcdfe3" stroke-width="1" />
<line x1="28.5" y1="505.6" x2="577.5" y2="505.6" stroke="#dcdfe3" stroke-width="1" />
<line x1="28.5" y1="522.32" x2="577.5" y2="522.32" stroke="#dcdfe3" stroke-width="1" />
<line x1="28.5" y1="539.04" x2="577.5" y2="539.04" stroke="#dcdfe3" stroke-width="1" />
<line x1="28.5" y1="555.76" x2="577.5" y2="555.76" stroke="#dcdfe3" stroke-width="1" />
<line x1="28.5" y1="187.92" x2="92.0" y2="187.92" stroke="#1a1a1a" stroke-width="1.15" />
<line x1="28.5" y1="204.64" x2="92.0" y2="204.64" stroke="#1a1a1a" stroke-width="1.15" />
<line x1="28.5" y1="221.36" x2="92.0" y2="221.36" stroke="#1a1a1a" stroke-width="1.15" />
<line x1="28.5" y1="238.08" x2="92.0" y2="238.08" stroke="#1a1a1a" stroke-width="1.15" />
<line x1="28.5" y1="254.8" x2="92.0" y2="254.8" stroke="#1a1a1a" stroke-width="1.15" />
<line x1="28.5" y1="271.52" x2="92.0" y2="271.52" stroke="#1a1a1a" stroke-width="1.15" />
<line x1="28.5" y1="288.24" x2="92.0" y2="288.24" stroke="#1a1a1a" stroke-width="1.15" />
<line x1="28.5" y1="304.96" x2="92.0" y2="304.96" stroke="#1a1a1a" stroke-width="1.15" />
<line x1="28.5" y1="321.68" x2="92.0" y2="321.68" stroke="#1a1a1a" stroke-width="1.15" />
<line x1="28.5" y1="338.4" x2="92.0" y2="338.4" stroke="#1a1a1a" stroke-width="1.15" />
<line x1="28.5" y1="355.12" x2="92.0" y2="355.12" stroke="#1a1a1a" stroke-width="1.15" />
<line x1="28.5" y1="371.84" x2="92.0" y2="371.84" stroke="#1a1a1a" stroke-width="1.15" />
<line x1="28.5" y1="388.56" x2="92.0" y2="388.56" stroke="#1a1a1a" stroke-width="1.15" />
<line x1="28.5" y1="405.28" x2="92.0" y2="405.28" stroke="#1a1a1a" stroke-width="1.15" />
<line x1="28.5" y1="422.0" x2="92.0" y2="422.0" stroke="#1a1a1a" stroke-width="1.15" />
<line x1="28.5" y1="438.72" x2="92.0" y2="438.72" stroke="#1a1a1a" stroke-width="1.15" />
<line x1="28.5" y1="455.44" x2="92.0" y2="455.44" stroke="#1a1a1a" stroke-width="1.15" />
<line x1="28.5" y1="472.16" x2="92.0" y2="472.16" stroke="#1a1a1a" stroke-width="1.15" />
<line x1="28.5" y1="488.88" x2="92.0" y2="488.88" stroke="#1a1a1a" stroke-width="1.15" />
<line x1="92.0" y1="187.92" x2="143.5" y2="187.92" stroke="#111" stroke-width="1.25" />
<line x1="92.0" y1="204.64" x2="143.5" y2="204.64" stroke="#111" stroke-width="1.25" />
<line x1="92.0" y1="221.36" x2="143.5" y2="221.36" stroke="#111" stroke-width="1.25" />
<line x1="92.0" y1="238.08" x2="143.5" y2="238.08" stroke="#111" stroke-width="1.25" />
<line x1="92.0" y1="254.8" x2="143.5" y2="254.8" stroke="#111" stroke-width="1.25" />
<line x1="92.0" y1="271.52" x2="143.5" y2="271.52" stroke="#111" stroke-width="1.25" />
<line x1="92.0" y1="288.24" x2="143.5" y2="288.24" stroke="#111" stroke-width="1.25" />
<line x1="92.0" y1="304.96" x2="143.5" y2="304.96" stroke="#111" stroke-width="1.25" />
<line x1="92.0" y1="321.68" x2="143.5" y2="321.68" stroke="#111" stroke-width="1.25" />
<line x1="92.0" y1="338.4" x2="143.5" y2="338.4" stroke="#111" stroke-width="1.25" />
<line x1="92.0" y1="355.12" x2="143.5" y2="355.12" stroke="#111" stroke-width="1.25" />
<line x1="92.0" y1="371.84" x2="143.5" y2="371.84" stroke="#111" stroke-width="1.25" />
<line x1="92.0" y1="388.56" x2="143.5" y2="388.56" stroke="#111" stroke-width="1.25" />
<line x1="92.0" y1="405.28" x2="143.5" y2="405.28" stroke="#111" stroke-width="1.25" />
<line x1="92.0" y1="422.0" x2="143.5" y2="422.0" stroke="#111" stroke-width="1.25" />
<line x1="92.0" y1="438.72" x2="143.5" y2="438.72" stroke="#111" stroke-width="1.25" />
<line x1="92.0" y1="455.44" x2="143.5" y2="455.44" stroke="#111" stroke-width="1.25" />
<line x1="92.0" y1="472.16" x2="143.5" y2="472.16" stroke="#111" stroke-width="1.25" />
<line x1="92.0" y1="488.88" x2="143.5" y2="488.88" stroke="#111" stroke-width="1.25" />
<line x1="92.0" y1="171.2" x2="92.0" y2="539.04" stroke="#111" stroke-width="1.6" />
<line x1="143.5" y1="171.2" x2="143.5" y2="539.04" stroke="#111" stroke-width="1.5" />
<line x1="182.22" y1="171.2" x2="182.22" y2="336.4" stroke="#222" stroke-width="1" stroke-dasharray="1.2 1.2"/>
<line x1="220.94" y1="171.2" x2="220.94" y2="539.04" stroke="#111" stroke-width="1.5" />
<line x1="259.65999999999997" y1="171.2" x2="259.65999999999997" y2="336.4" stroke="#222" stroke-width="1" stroke-dasharray="1.2 1.2"/>
<line x1="298.38" y1="171.2" x2="298.38" y2="539.04" stroke="#111" stroke-width="1.5" />
<line x1="337.1" y1="171.2" x2="337.1" y2="336.4" stroke="#222" stroke-width="1" stroke-dasharray="1.2 1.2"/>
<line x1="375.82" y1="171.2" x2="375.82" y2="539.04" stroke="#111" stroke-width="1.5" />
<line x1="414.53999999999996" y1="171.2" x2="414.53999999999996" y2="336.4" stroke="#222" stroke-width="1" stroke-dasharray="1.2 1.2"/>
<line x1="453.26" y1="171.2" x2="453.26" y2="539.04" stroke="#111" stroke-width="1.5" />
<line x1="491.98" y1="171.2" x2="491.98" y2="336.4" stroke="#222" stroke-width="1" stroke-dasharray="1.2 1.2"/>
<line x1="530.7" y1="171.2" x2="530.7" y2="539.04" stroke="#111" stroke-width="1.5" />
<line x1="569.42" y1="171.2" x2="569.42" y2="336.4" stroke="#222" stroke-width="1" stroke-dasharray="1.2 1.2"/>
<line x1="28.5" y1="505.6" x2="143.5" y2="505.6" stroke="#111" stroke-width="1.3" />
<line x1="28.5" y1="522.32" x2="577.5" y2="522.32" stroke="#111" stroke-width="1.4" />
<line x1="28.5" y1="539.04" x2="577.5" y2="539.04" stroke="#111" stroke-width="1.4" />
<line x1="182.22" y1="522.32" x2="182.22" y2="539.04" stroke="#111" stroke-width="1.3" />
<line x1="259.65999999999997" y1="522.32" x2="259.65999999999997" y2="539.04" stroke="#111" stroke-width="1.3" />
<line x1="337.1" y1="522.32" x2="337.1" y2="539.04" stroke="#111" stroke-width="1.3" />
<line x1="414.53999999999996" y1="522.32" x2="414.53999999999996" y2="539.04" stroke="#111" stroke-width="1.3" />
<line x1="491.98" y1="522.32" x2="491.98" y2="539.04" stroke="#111" stroke-width="1.3" />
<line x1="569.42" y1="522.32" x2="569.42" y2="539.04" stroke="#111" stroke-width="1.3" />
<g filter="url(#blur1)"><rect x="47.8" y="170" width="31.4" height="167" fill="#cdcdcd"/></g>
<g filter="url(#blur3)">
<rect x="50.9" y="173.2" width="11" height="13" fill="#b8b8b8" />
<rect x="66.1" y="173.2" width="11" height="13" fill="#bcbcbc" />
<rect x="51.9" y="189.9" width="11" height="13" fill="#b0b0b0" />
<rect x="64.9" y="189.9" width="11" height="13" fill="#b4b4b4" />
<rect x="58" y="188.9" width="7" height="7" fill="#e2e2e2" />
<rect x="50.8" y="206.6" width="11" height="13" fill="#b0b0b0" />
<rect x="63.9" y="206.6" width="11" height="13" fill="#aaaaaa" />
<rect x="70" y="213.6" width="7" height="6" fill="#dedede" />
<rect x="52.4" y="223.4" width="11" height="13" fill="#a4a4a4" />
<rect x="65.5" y="223.4" width="11" height="13" fill="#bcbcbc" />
<rect x="52.0" y="240.1" width="11" height="13" fill="#b0b0b0" />
<rect x="63.7" y="240.1" width="11" height="13" fill="#aaaaaa" />
<rect x="58" y="239.1" width="7" height="7" fill="#e2e2e2" />
<rect x="52.1" y="256.8" width="11" height="13" fill="#a4a4a4" />
<rect x="65.3" y="256.8" width="11" height="13" fill="#b4b4b4" />
<rect x="50.8" y="273.5" width="11" height="13" fill="#b8b8b8" />
<rect x="66.0" y="273.5" width="11" height="13" fill="#a0a0a0" />
<rect x="70" y="280.5" width="7" height="6" fill="#dedede" />
<rect x="51.0" y="290.2" width="11" height="13" fill="#b0b0b0" />
<rect x="65.5" y="290.2" width="11" height="13" fill="#a0a0a0" />
<rect x="58" y="289.2" width="7" height="7" fill="#e2e2e2" />
<rect x="50.7" y="307.0" width="11" height="13" fill="#b8b8b8" />
<rect x="65.2" y="307.0" width="11" height="13" fill="#a0a0a0" />
<rect x="50.4" y="323.7" width="11" height="13" fill="#a4a4a4" />
<rect x="64.2" y="323.7" width="11" height="13" fill="#a0a0a0" />
</g>
<g filter="url(#blur1)">
<rect x="45.6" y="193.9" width="1.6" height="6" fill="#666" />
<rect x="45.6" y="227.4" width="1.6" height="6" fill="#666" />
<rect x="45.6" y="260.8" width="1.6" height="6" fill="#666" />
<rect x="45.6" y="311.0" width="1.6" height="6" fill="#666" />
</g>
<rect x="29.5" y="155" width="61.5" height="16.2" fill="#d5ebc6" />
<text transform="translate(60.2,168.3) scale(0.8,1)" font-size="14.5" fill="#359a22" font-family='"Liberation Serif","Noto Serif CJK SC",serif' text-anchor="middle" font-weight="normal" >A</text>
<text transform="translate(13.2,185.8) scale(0.94,1)" font-size="14.5" fill="#444" font-family='"Liberation Serif","Noto Serif CJK SC",serif' text-anchor="middle" font-weight="normal" >23</text>
<text transform="translate(13.2,202.5) scale(0.94,1)" font-size="14.5" fill="#444" font-family='"Liberation Serif","Noto Serif CJK SC",serif' text-anchor="middle" font-weight="normal" >24</text>
<text transform="translate(13.2,219.2) scale(0.94,1)" font-size="14.5" fill="#444" font-family='"Liberation Serif","Noto Serif CJK SC",serif' text-anchor="middle" font-weight="normal" >25</text>
<text transform="translate(13.2,236.0) scale(0.94,1)" font-size="14.5" fill="#444" font-family='"Liberation Serif","Noto Serif CJK SC",serif' text-anchor="middle" font-weight="normal" >26</text>
<text transform="translate(13.2,252.7) scale(0.94,1)" font-size="14.5" fill="#444" font-family='"Liberation Serif","Noto Serif CJK SC",serif' text-anchor="middle" font-weight="normal" >27</text>
<text transform="translate(13.2,269.4) scale(0.94,1)" font-size="14.5" fill="#444" font-family='"Liberation Serif","Noto Serif CJK SC",serif' text-anchor="middle" font-weight="normal" >28</text>
<text transform="translate(13.2,286.1) scale(0.94,1)" font-size="14.5" fill="#444" font-family='"Liberation Serif","Noto Serif CJK SC",serif' text-anchor="middle" font-weight="normal" >29</text>
<text transform="translate(13.2,302.8) scale(0.94,1)" font-size="14.5" fill="#444" font-family='"Liberation Serif","Noto Serif CJK SC",serif' text-anchor="middle" font-weight="normal" >30</text>
<text transform="translate(13.2,319.6) scale(0.94,1)" font-size="14.5" fill="#444" font-family='"Liberation Serif","Noto Serif CJK SC",serif' text-anchor="middle" font-weight="normal" >31</text>
<text transform="translate(13.2,336.3) scale(0.94,1)" font-size="14.5" fill="#444" font-family='"Liberation Serif","Noto Serif CJK SC",serif' text-anchor="middle" font-weight="normal" >32</text>
<rect x="0" y="338.4" width="28.5" height="16.72" fill="#cfe8bf" />
<text transform="translate(13.2,353.0) scale(0.94,1)" font-size="14.5" fill="#3a9a25" font-family='"Liberation Serif","Noto Serif CJK SC",serif' text-anchor="middle" font-weight="normal" >33</text>
<text transform="translate(13.2,369.7) scale(0.94,1)" font-size="14.5" fill="#444" font-family='"Liberation Serif","Noto Serif CJK SC",serif' text-anchor="middle" font-weight="normal" >34</text>
<text transform="translate(13.2,386.4) scale(0.94,1)" font-size="14.5" fill="#444" font-family='"Liberation Serif","Noto Serif CJK SC",serif' text-anchor="middle" font-weight="normal" >35</text>
<text transform="translate(13.2,403.2) scale(0.94,1)" font-size="14.5" fill="#444" font-family='"Liberation Serif","Noto Serif CJK SC",serif' text-anchor="middle" font-weight="normal" >36</text>
<text transform="translate(13.2,419.9) scale(0.94,1)" font-size="14.5" fill="#444" font-family='"Liberation Serif","Noto Serif CJK SC",serif' text-anchor="middle" font-weight="normal" >37</text>
<text transform="translate(13.2,436.6) scale(0.94,1)" font-size="14.5" fill="#444" font-family='"Liberation Serif","Noto Serif CJK SC",serif' text-anchor="middle" font-weight="normal" >38</text>
<text transform="translate(13.2,453.3) scale(0.94,1)" font-size="14.5" fill="#444" font-family='"Liberation Serif","Noto Serif CJK SC",serif' text-anchor="middle" font-weight="normal" >39</text>
<text transform="translate(13.2,470.0) scale(0.94,1)" font-size="14.5" fill="#444" font-family='"Liberation Serif","Noto Serif CJK SC",serif' text-anchor="middle" font-weight="normal" >40</text>
<text transform="translate(13.2,486.8) scale(0.94,1)" font-size="14.5" fill="#444" font-family='"Liberation Serif","Noto Serif CJK SC",serif' text-anchor="middle" font-weight="normal" >41</text>
<text transform="translate(13.2,503.5) scale(0.94,1)" font-size="14.5" fill="#444" font-family='"Liberation Serif","Noto Serif CJK SC",serif' text-anchor="middle" font-weight="normal" >42</text>
<text transform="translate(13.2,520.2) scale(0.94,1)" font-size="14.5" fill="#444" font-family='"Liberation Serif","Noto Serif CJK SC",serif' text-anchor="middle" font-weight="normal" >43</text>
<text transform="translate(13.2,536.9) scale(0.94,1)" font-size="14.5" fill="#444" font-family='"Liberation Serif","Noto Serif CJK SC",serif' text-anchor="middle" font-weight="normal" >44</text>
<text transform="translate(13.2,553.6) scale(0.94,1)" font-size="14.5" fill="#444" font-family='"Liberation Serif","Noto Serif CJK SC",serif' text-anchor="middle" font-weight="normal" >45</text>
<line x1="28.5" y1="338.4" x2="577.5" y2="338.4" stroke="#559a30" stroke-width="2" />
<line x1="28.5" y1="354.52" x2="577.5" y2="354.52" stroke="#559a30" stroke-width="2.7" />
<rect x="29.6" y="352.22" width="4.6" height="4.6" fill="#4f962c" />
<text x="60.3" y="519.6" font-size="14" fill="#111" font-family='"Liberation Serif","Noto Serif CJK SC",serif' text-anchor="middle" font-weight="normal" >多出金额</text>
<text x="60.3" y="536.3" font-size="14" fill="#111" font-family='"Liberation Serif","Noto Serif CJK SC",serif' text-anchor="middle" font-weight="normal" >总金额</text>
<text x="117" y="519.6" font-size="14" fill="#111" font-family='"Liberation Serif","Noto Serif CJK SC",serif' text-anchor="middle" font-weight="normal" letter-spacing="1.4">12.2</text>
<text x="117" y="536.3" font-size="14" fill="#111" font-family='"Liberation Serif","Noto Serif CJK SC",serif' text-anchor="middle" font-weight="normal" letter-spacing="1.4">12.2</text>
<text x="162.9" y="535.5" font-size="12" fill="#111" font-family='"Liberation Sans","Noto Sans CJK SC",sans-serif' text-anchor="middle" font-weight="normal" >0</text>
<text x="201.6" y="535.5" font-size="12" fill="#111" font-family='"Liberation Sans","Noto Sans CJK SC",sans-serif' text-anchor="middle" font-weight="normal" >0</text>
<text x="240.3" y="535.5" font-size="12" fill="#111" font-family='"Liberation Sans","Noto Sans CJK SC",sans-serif' text-anchor="middle" font-weight="normal" >0</text>
<text x="279.0" y="535.5" font-size="12" fill="#111" font-family='"Liberation Sans","Noto Sans CJK SC",sans-serif' text-anchor="middle" font-weight="normal" >0</text>
<text x="317.7" y="535.5" font-size="12" fill="#111" font-family='"Liberation Sans","Noto Sans CJK SC",sans-serif' text-anchor="middle" font-weight="normal" >0</text>
<text x="356.5" y="535.5" font-size="12" fill="#111" font-family='"Liberation Sans","Noto Sans CJK SC",sans-serif' text-anchor="middle" font-weight="normal" >0</text>
<text x="395.2" y="535.5" font-size="12" fill="#111" font-family='"Liberation Sans","Noto Sans CJK SC",sans-serif' text-anchor="middle" font-weight="normal" >0</text>
<text x="433.9" y="535.5" font-size="12" fill="#111" font-family='"Liberation Sans","Noto Sans CJK SC",sans-serif' text-anchor="middle" font-weight="normal" >0</text>
<text x="472.6" y="535.5" font-size="12" fill="#111" font-family='"Liberation Sans","Noto Sans CJK SC",sans-serif' text-anchor="middle" font-weight="normal" >0</text>
<text x="511.3" y="535.5" font-size="12" fill="#111" font-family='"Liberation Sans","Noto Sans CJK SC",sans-serif' text-anchor="middle" font-weight="normal" >0</text>
<text x="550.1" y="535.5" font-size="12" fill="#111" font-family='"Liberation Sans","Noto Sans CJK SC",sans-serif' text-anchor="middle" font-weight="normal" >0</text>
<rect x="6" y="342" width="45" height="146" fill="none" stroke="#fb0a0a" stroke-width="2.2"/>
<rect x="115.5" y="384" width="252" height="42" rx="9" fill="#1d5a3a" opacity="0.55" filter="url(#shadow)"/>
<rect x="114.3" y="382" width="252.5" height="42" rx="9" fill="#ffffff"/>
<text x="124" y="406.6" font-size="18.5" fill="#fb0d0d" font-family='"Liberation Sans","Noto Sans CJK SC",sans-serif' text-anchor="start" font-weight="350" >同样的，已经插入就几行</text>
<rect x="577.5" y="153" width="22.5" height="400" fill="#e6e8eb" />
<rect x="594.8" y="110" width="5.2" height="443" fill="#eef0f2" />
<line x1="594.8" y1="110" x2="594.8" y2="553" stroke="#d3d6db" stroke-width="0.8" />
<line x1="578.0" y1="155" x2="578.0" y2="553" stroke="#cfd2d7" stroke-width="1" />
<line x1="580.5" y1="160" x2="592.3" y2="160" stroke="#47557a" stroke-width="1.6" />
<path d="M583.2 176.2 L586.9 172.6 L590.6 176.2 Z" fill="#5a6685"/>
<rect x="580.3" y="364.5" width="12.4" height="174" fill="#f6f7f8" stroke="#c3c7cd" stroke-width="1"/>
<line x1="583.5" y1="449" x2="589.5" y2="449" stroke="#b9bdc4" stroke-width="1" />
<line x1="583.5" y1="452" x2="589.5" y2="452" stroke="#b9bdc4" stroke-width="1" />
<line x1="583.5" y1="455" x2="589.5" y2="455" stroke="#b9bdc4" stroke-width="1" />
<rect x="595.5" y="315.5" width="4.5" height="88" fill="#5fa530" />
<path d="M599.5 356.5 L596.8 359.5 L599.5 362.5 Z" fill="#fff"/>
<rect x="0" y="553" width="600" height="18.5" fill="#e3e6ea" />
<line x1="0" y1="553.2" x2="600" y2="553.2" stroke="#cdd1d7" stroke-width="1" />
<line x1="3.2" y1="557.2" x2="3.2" y2="565.4" stroke="#aab0bb" stroke-width="1.4" />
<path d="M10 557.2 V565.4 L4.6 561.3 Z" fill="#aab0bb"/>
<path d="M23.6 557.2 V565.4 L18 561.3 Z" fill="#aab0bb"/>
<path d="M33.8 557.2 V565.4 L39.4 561.3 Z" fill="#3f9a22"/>
<path d="M46.2 557.2 V565.4 L51.8 561.3 Z" fill="#3f9a22"/>
<line x1="53.2" y1="557.2" x2="53.2" y2="565.4" stroke="#3f9a22" stroke-width="1.5" />
<rect x="64.5" y="554" width="59.5" height="17" fill="#e9ebee" />
<line x1="64.5" y1="554" x2="64.5" y2="571" stroke="#c6cad0" stroke-width="1" />
<text x="95.0" y="566.6" font-size="11" fill="#2a2e36" font-family='"Liberation Sans","Noto Sans CJK SC",sans-serif' text-anchor="middle" font-weight="normal" >2013.12</text>
<rect x="124" y="554" width="56" height="17" fill="#e9ebee" />
<line x1="124" y1="554" x2="124" y2="571" stroke="#c6cad0" stroke-width="1" />
<text x="152.8" y="566.6" font-size="11" fill="#2a2e36" font-family='"Liberation Sans","Noto Sans CJK SC",sans-serif' text-anchor="middle" font-weight="normal" >2014.1</text>
<rect x="180" y="554" width="55" height="17" fill="#e9ebee" />
<line x1="180" y1="554" x2="180" y2="571" stroke="#c6cad0" stroke-width="1" />
<text x="208.3" y="566.6" font-size="11" fill="#2a2e36" font-family='"Liberation Sans","Noto Sans CJK SC",sans-serif' text-anchor="middle" font-weight="normal" >2014.2</text>
<rect x="235" y="553" width="48.30000000000001" height="18" fill="#ffffff" />
<rect x="235" y="569.3" width="48.30000000000001" height="1.8" fill="#4a9a2a" />
<line x1="235" y1="554" x2="235" y2="571" stroke="#c6cad0" stroke-width="1" />
<text x="259.9" y="566.6" font-size="11" fill="#2a2e36" font-family='"Liberation Sans","Noto Sans CJK SC",sans-serif' text-anchor="middle" font-weight="normal" >2014.3</text>
<line x1="283.3" y1="554" x2="283.3" y2="571" stroke="#c6cad0" stroke-width="1" />
<circle cx="291" cy="561.6" r="0.9" fill="#3f9a22"/>
<circle cx="294.6" cy="561.6" r="0.9" fill="#3f9a22"/>
<circle cx="298.2" cy="561.6" r="0.9" fill="#3f9a22"/>
<path d="M305.3 561.7 H314.5 M309.9 557 V566.4" stroke="#47557a" stroke-width="1.5" fill="none"/>
<line x1="335.8" y1="556" x2="335.8" y2="567.6" stroke="#47557a" stroke-width="1.3" />
<path d="M350.8 559.4 V565 L347.4 562.2 Z" fill="#55628a"/>
<rect x="355.5" y="555.8" width="74" height="12.2" rx="1" fill="#f5f6f7" stroke="#c4c8ce" stroke-width="1"/>
<line x1="389.5" y1="559" x2="389.5" y2="565" stroke="#c4c8ce" stroke-width="1" />
<line x1="392.5" y1="559" x2="392.5" y2="565" stroke="#c4c8ce" stroke-width="1" />
<line x1="395.5" y1="559" x2="395.5" y2="565" stroke="#c4c8ce" stroke-width="1" />
<rect x="0" y="571.3" width="600" height="19.7" fill="#dcdfe3" />
<text x="121.5" y="586" font-size="11" fill="#2a2e36" font-family='"Liberation Sans","Noto Sans CJK SC",sans-serif' text-anchor="start" font-weight="normal" >求和=0</text>
<text x="163.3" y="586" font-size="11" fill="#2a2e36" font-family='"Liberation Sans","Noto Sans CJK SC",sans-serif' text-anchor="start" font-weight="normal" >平均值=0</text>
<text x="216.7" y="586" font-size="11" fill="#2a2e36" font-family='"Liberation Sans","Noto Sans CJK SC",sans-serif' text-anchor="start" font-weight="normal" >计数=0</text>
<rect x="313.8" y="571.3" width="18.2" height="19.7" fill="#a9d48e" />
<g><rect x="317" y="576.3" width="11.6" height="10" fill="#3d6a3a"/><path d="M317 579.6 H328.6 M317 583 H328.6 M320.9 576.3 V586.3 M324.8 576.3 V586.3" stroke="#a9d48e" stroke-width="0.9" fill="none"/></g>
<g><rect x="341.3" y="576.3" width="10.4" height="10" fill="#4a5268"/><path d="M341.3 579.6 H351.7 M341.3 583 H351.7 M344.8 576.3 V586.3 M348.2 576.3 V586.3" stroke="#dfe2e6" stroke-width="0.9" stroke-dasharray="1.2 0.8" fill="none"/><rect x="348.4" y="579.8" width="3.3" height="6.5" fill="#4a5268"/></g>
<g><rect x="365" y="576.2" width="10.8" height="10" fill="#3c4660"/><path d="M370.4 578 V584.6 M367 581.3 H373.8" stroke="#fff" stroke-width="2.6" fill="none"/></g>
<path d="M381.2 580.2 H385.8 L383.5 582.8 Z" fill="#55628a"/>
<text x="399.5" y="585.3" font-size="11" fill="#2a2e36" font-family='"Liberation Sans","Noto Sans CJK SC",sans-serif' text-anchor="start" font-weight="normal" >100 %</text>
<line x1="436.3" y1="581.3" x2="445" y2="581.3" stroke="#47557a" stroke-width="1.5" />
<line x1="452" y1="581.3" x2="510" y2="581.3" stroke="#3f8a1f" stroke-width="1.7" />
<line x1="514" y1="581.3" x2="569.5" y2="581.3" stroke="#8a92a2" stroke-width="1.2" />
<rect x="509" y="575.2" width="5.6" height="12" rx="0.8" fill="#f4f5f6" stroke="#6b7488" stroke-width="1"/>
<path d="M575.8 581.3 H583.8 M579.8 577 V585.6" stroke="#47557a" stroke-width="1.4" fill="none"/>
<g font-family='"Liberation Sans","Noto Sans CJK SC",sans-serif' font-weight="900" font-size="15" stroke="#ffffff" stroke-width="1.8" paint-order="stroke" stroke-linejoin="round"><text x="501" y="559.4" fill="#ff7a18" textLength="35" lengthAdjust="spacingAndGlyphs">第九</text><text x="536.5" y="559.4" fill="#4a78d6" textLength="52.5" lengthAdjust="spacingAndGlyphs">软件网</text></g>
<text x="505.5" y="569.2" font-family='"Liberation Sans","Noto Sans CJK SC",sans-serif' font-weight="bold" font-size="10" fill="#3a6cd0" stroke="#ffffff" stroke-width="1.2" paint-order="stroke" textLength="80" lengthAdjust="spacingAndGlyphs">WWW.D9SOFT.COM</text>
</svg>
</body></html>
